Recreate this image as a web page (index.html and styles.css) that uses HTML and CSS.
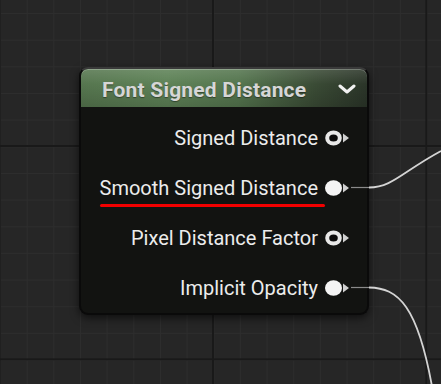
FILE: index.html
```html
<!DOCTYPE html>
<html lang="en">
<head>
  <meta charset="UTF-8" />
  <title>Font Signed Distance</title>
  <link rel="stylesheet" href="styles.css">
</head>
<body>
  <div class="canvas">
    <div class="node">
      <div class="node-header">
        <span class="node-title">Font Signed Distance</span>
        <svg class="chevron" width="18" height="10" viewBox="0 0 18 10">
          <polyline points="2,2 9,8 16,2" fill="none" stroke="#f2f2f2" stroke-width="3" stroke-linecap="round" stroke-linejoin="round"/>
        </svg>
      </div>

      <div class="node-body">
        <div class="pin-row">
          <span class="pin-label">Signed Distance</span>
          <svg class="pin" width="26" height="16" viewBox="0 0 26 16">
            <ellipse cx="8.5" cy="8" rx="6.3" ry="5.6" fill="#0c0c0c" stroke="#e8e8e8" stroke-width="4"/>
            <polygon points="18,3.5 24,8 18,12.5" fill="#d0d0d0"/>
          </svg>
        </div>
        <div class="pin-row">
          <span class="pin-label marked">Smooth Signed Distance</span>
          <svg class="pin" width="26" height="16" viewBox="0 0 26 16">
            <ellipse cx="8.5" cy="8" rx="8.5" ry="7.8" fill="#f4f4f4"/>
            <polygon points="18,3.5 24,8 18,12.5" fill="#d0d0d0"/>
          </svg>
        </div>
        <div class="pin-row">
          <span class="pin-label">Pixel Distance Factor</span>
          <svg class="pin" width="26" height="16" viewBox="0 0 26 16">
            <ellipse cx="8.5" cy="8" rx="6.3" ry="5.6" fill="#0c0c0c" stroke="#e8e8e8" stroke-width="4"/>
            <polygon points="18,3.5 24,8 18,12.5" fill="#d0d0d0"/>
          </svg>
        </div>
        <div class="pin-row">
          <span class="pin-label">Implicit Opacity</span>
          <svg class="pin" width="26" height="16" viewBox="0 0 26 16">
            <ellipse cx="8.5" cy="8" rx="8.5" ry="7.8" fill="#f4f4f4"/>
            <polygon points="18,3.5 24,8 18,12.5" fill="#d0d0d0"/>
          </svg>
        </div>
      </div>
    </div>

    <!-- wires going out of the connected pins -->
    <svg class="wires" width="441" height="384" viewBox="0 0 441 384">
      <path d="M351,187.5 L369,187.5" stroke="#8a8a8a" stroke-width="1.2" fill="none"/>
      <path d="M369,187.5 C392,187.5 402,172 441,151" stroke="#d4d4d4" stroke-width="1.8" fill="none"/>
      <path d="M351,287.5 L369,287.5" stroke="#8a8a8a" stroke-width="1.2" fill="none"/>
      <path d="M369,287.5 C398,288 418,305 433,392" stroke="#d4d4d4" stroke-width="1.8" fill="none"/>
    </svg>
  </div>
</body>
</html>
```

FILE: styles.css
```css
body {
  margin: 0;
  background-color: #262626;
  font-family: Roboto, "Liberation Sans", sans-serif;
}

.canvas {
  position: relative;
  width: 441px;
  height: 384px;
  overflow: hidden;
  padding: 67px 0 0 79px;
  box-sizing: border-box;
  background-color: #262626;
  background-image:
    linear-gradient(to right, #191919 2px, transparent 2px),
    linear-gradient(to bottom, #191919 2px, transparent 2px),
    linear-gradient(to right, #2d2d2d 1px, transparent 1px),
    linear-gradient(to bottom, #2d2d2d 1px, transparent 1px);
  background-size: 213.33px 213.33px, 213.33px 213.33px, 26.667px 26.667px, 26.667px 26.667px;
  background-position: 212px 145px, 212px 145px, 0 13px, 0 13px;
}

.node {
  width: 290px;
  height: 248px;
  box-sizing: border-box;
  border: 2px solid #0a0a0a;
  border-top-color: #3a3a3a;
  border-radius: 9px;
  background-color: #121311;
  box-shadow: 0 3px 8px rgba(0,0,0,0.6);
}

.node-header {
  display: flex;
  align-items: center;
  justify-content: space-between;
  height: 38px;
  box-sizing: border-box;
  padding: 4px 11px 0 21px;
  border-radius: 7px 7px 0 0;
  background:
    linear-gradient(to bottom, rgba(255,255,255,0.12), rgba(255,255,255,0) 40%, rgba(0,0,0,0.15)),
    linear-gradient(to right, #56764f 0%, #5e8257 30%, #55764f 55%, #3a4b35 82%, #2b3529 100%);
  box-shadow: inset 0 1px rgba(255,255,255,0.25);
}

.node-title {
  color: #d6d6d6;
  font-size: 21px;
  font-weight: bold;
  letter-spacing: 0.2px;
  line-height: 34px;
  text-shadow: 0 1px 1px rgba(0,0,0,0.4);
}

.chevron {
  margin-top: -3px;
}

.node-body {
  padding-top: 6px;
}

.pin-row {
  display: flex;
  align-items: center;
  justify-content: flex-end;
  gap: 7px;
  height: 50px;
  padding-right: 16px;
}

.pin-label {
  position: relative;
  color: #ececec;
  font-size: 20px;
  line-height: 24px;
}

.pin-label.marked::after {
  content: "";
  position: absolute;
  left: 0;
  right: -7px;
  bottom: -7px;
  height: 3px;
  border-radius: 2px;
  background-color: #f20000;
}

.pin {
  display: block;
}

.wires {
  position: absolute;
  top: 0;
  left: 0;
  pointer-events: none;
}
```
